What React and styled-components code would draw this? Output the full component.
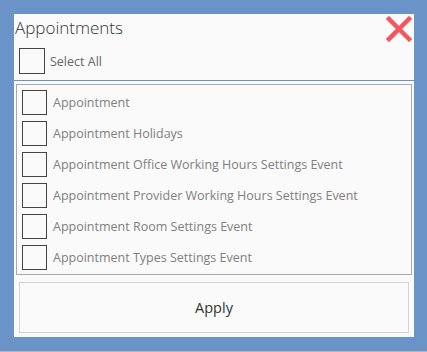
import React from 'react';
import styled, {createGlobalStyle} from 'styled-components';

const GlobalStyle = createGlobalStyle`
    html, body {
        margin: 0;
        padding: 0;
        background: #6a94c7;
    }
    body {
        font-family: "Open Sans", "Noto Sans", sans-serif;
    }
`;

const Page = styled.div`
    box-sizing: border-box;
    height: 352px;
    padding: 14px 13px 0 14px;
    border-bottom: 1px solid #b4b4b4;
`;

const Panel = styled.div`
    box-sizing: border-box;
    width: 400px;
    height: 323px;
    background: #fafafa;
    display: flex;
    flex-direction: column;
`;

const Header = styled.div`
    display: flex;
    justify-content: space-between;
    align-items: flex-start;
    padding: 2px 2px 0 1px;
    height: 32px;
`;

const Title = styled.h1`
    margin: 0;
    font-size: 17px;
    font-weight: 300;
    color: #333;
    line-height: 24px;
`;

const CloseButton = styled.button`
    border: none;
    background: none;
    padding: 0;
    width: 26px;
    height: 26px;
    cursor: pointer;
`;

const SelectAllRow = styled.div`
    display: flex;
    align-items: center;
    gap: 5px;
    padding: 0 0 6px 5px;
    height: 26px;
    border-bottom: 1px solid #6a94c7;
`;

const Box = styled.span`
    box-sizing: border-box;
    width: ${p => p.size}px;
    height: ${p => p.size}px;
    border: 1px solid #444;
    background: #fafafa;
    flex-shrink: 0;
`;

const SelectAllLabel = styled.span`
    font-size: 12.5px;
    color: #666;
`;

const List = styled.ul`
    box-sizing: border-box;
    list-style: none;
    margin: 3px 2px 0 2px;
    padding: 5px 5px 3px 5px;
    height: 191px;
    border: 1px solid #aaa;
    display: flex;
    flex-direction: column;
    gap: 6px;
`;

const ListItem = styled.li`
    display: flex;
    align-items: center;
    gap: 6px;
    height: 25px;
    font-size: 12.5px;
    color: #808080;
    cursor: pointer;
`;

const ApplyButton = styled.button`
    box-sizing: border-box;
    margin: 7px 5px 0 5px;
    height: 51px;
    border: 1px solid #d2d2d2;
    background: #fafafa;
    font-family: inherit;
    font-size: 14.5px;
    color: #333;
    cursor: pointer;
`;

const items = [
    'Appointment',
    'Appointment Holidays',
    'Appointment Office Working Hours Settings Event',
    'Appointment Provider Working Hours Settings Event',
    'Appointment Room Settings Event',
    'Appointment Types Settings Event',
];

export default function App() {
    return (
        <>
            <GlobalStyle/>
            <Page>
                <Panel>
                    <Header>
                        <Title>Appointments</Title>
                        <CloseButton aria-label="Close">
                            <svg width="26" height="26" viewBox="0 0 26 26">
                                <path d="M3 3 L23 23 M23 3 L3 23" stroke="#f4555f" strokeWidth="4.5" strokeLinecap="square"/>
                            </svg>
                        </CloseButton>
                    </Header>
                    <SelectAllRow>
                        <Box size={26}/>
                        <SelectAllLabel>Select All</SelectAllLabel>
                    </SelectAllRow>
                    <List>
                        {items.map(item => (
                            <ListItem key={item}>
                                <Box size={25}/>
                                {item}
                            </ListItem>
                        ))}
                    </List>
                    <ApplyButton>Apply</ApplyButton>
                </Panel>
            </Page>
        </>
    );
}
